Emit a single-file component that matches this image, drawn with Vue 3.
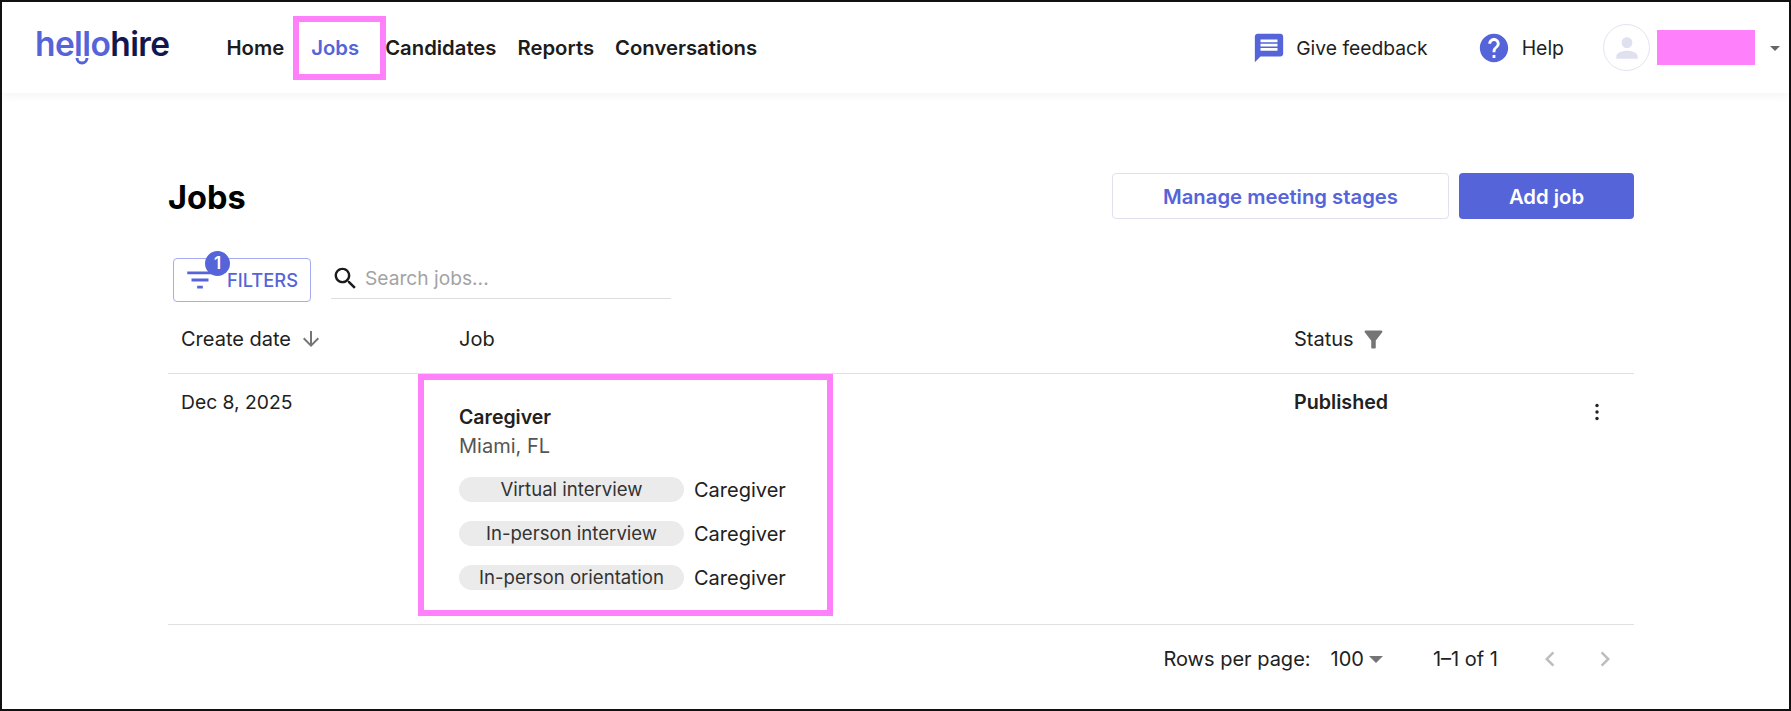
<template>
  <div class="frame">
    <header class="topbar">
      <div class="logo">
        <span class="logo-hello">hello</span><span class="logo-hire">hire</span>
        <svg class="logo-smile" viewBox="0 0 14 9" width="14" height="9">
          <path d="M2 1a5 5 0 0 0 10 0" fill="none" stroke="#5664d9" stroke-width="3" />
        </svg>
      </div>

      <nav class="nav">
        <a v-for="link in links" :key="link" class="nav-link" :class="{ active: link === 'Jobs' }">
          {{ link }}
          <span v-if="link === 'Jobs'" class="mark mark-nav"></span>
        </a>
      </nav>

      <div class="actions">
        <a class="action feedback">
          <svg viewBox="0 0 24 24" width="34" height="34"><path fill="#5664d9" d="M20 2H4c-1.1 0-1.99.9-1.99 2L2 22l4-4h14c1.1 0 2-.9 2-2V4c0-1.1-.9-2-2-2zm-2 12H6v-2h12v2zm0-3H6V9h12v2zm0-3H6V6h12v2z" /></svg>
          Give feedback
        </a>
        <a class="action help">
          <svg viewBox="0 0 24 24" width="34" height="34"><path fill="#5664d9" d="M12 2C6.48 2 2 6.48 2 12s4.48 10 10 10 10-4.48 10-10S17.52 2 12 2zm1 17h-2v-2h2v2zm2.07-7.75l-.9.92C13.45 12.9 13 13.5 13 15h-2v-.5c0-1.1.45-2.1 1.17-2.83l1.24-1.26c.37-.36.59-.86.59-1.41 0-1.1-.9-2-2-2s-2 .9-2 2H8c0-2.21 1.79-4 4-4s4 1.79 4 4c0 .88-.36 1.68-.93 2.25z" /></svg>
          Help
        </a>
        <div class="avatar">
          <svg viewBox="0 0 24 24" width="32" height="32"><path fill="#dfe1ee" d="M12 12c2.21 0 4-1.79 4-4s-1.79-4-4-4-4 1.79-4 4 1.79 4 4 4zm0 2c-2.67 0-8 1.34-8 4v2h16v-2c0-2.66-5.33-4-8-4z" /></svg>
        </div>
        <div class="user-name"></div>
        <svg class="user-caret" viewBox="0 0 24 24" width="24" height="24"><path fill="#666" d="M7 10l5 5 5-5z" /></svg>
      </div>
    </header>

    <main class="page">
      <div class="title-row">
        <h1>Jobs</h1>
        <div class="title-buttons">
          <button class="btn btn-outline">Manage meeting stages</button>
          <button class="btn btn-primary">Add job</button>
        </div>
      </div>

      <div class="toolbar">
        <button class="filters">
          <svg viewBox="0 0 24 24" width="34" height="34"><path fill="#5664d9" d="M10 18h4v-2h-4v2zM3 6v2h18V6H3zm3 7h12v-2H6v2z" /></svg>
          <span class="badge">1</span>
          FILTERS
        </button>
        <div class="search">
          <svg viewBox="0 0 24 24" width="29" height="29"><path fill="#1a1a1a" d="M15.5 14h-.79l-.28-.27C15.41 12.59 16 11.11 16 9.5 16 5.91 13.09 3 9.5 3S3 5.91 3 9.5 5.91 16 9.5 16c1.61 0 3.09-.59 4.23-1.57l.27.28v.79l5 4.99L20.49 19l-4.99-5zm-6 0C7.01 14 5 11.99 5 9.5S7.01 5 9.5 5 14 7.01 14 9.5 11.99 14 9.5 14z" /></svg>
          <span class="placeholder">Search jobs...</span>
        </div>
      </div>

      <div class="table">
        <div class="table-head">
          <div class="th">
            Create date
            <svg class="sort-arrow" viewBox="0 0 24 24" width="24" height="24"><path fill="#757575" d="M20 12l-1.41-1.41L13 16.17V4h-2v12.17l-5.58-5.59L4 12l8 8 8-8z" /></svg>
          </div>
          <div class="th">Job</div>
          <div class="th">
            Status
            <svg class="funnel" viewBox="0 0 24 24" width="27" height="27"><path fill="#757575" d="M4.25 5.61C6.27 8.2 10 13 10 13v6c0 .55.45 1 1 1h2c.55 0 1-.45 1-1v-6s3.72-4.8 5.74-7.39c.51-.66.04-1.61-.79-1.61H5.04c-.83 0-1.3.95-.79 1.61z" /></svg>
          </div>
        </div>

        <div class="table-row">
          <div class="td td-date">Dec 8, 2025</div>
          <div class="td td-job">
            <span class="mark mark-job"></span>
            <div class="job-title">Caregiver</div>
            <div class="job-location">Miami, FL</div>
            <div class="stages">
              <div v-for="stage in stages" :key="stage" class="stage">
                <span class="chip">{{ stage }}</span>
                <span>Caregiver</span>
              </div>
            </div>
          </div>
          <div class="td td-status">
            <span>Published</span>
            <svg class="more" viewBox="0 0 24 24" width="24" height="24">
              <circle cx="12" cy="5.5" r="1.7" fill="#222" />
              <circle cx="12" cy="12" r="1.7" fill="#222" />
              <circle cx="12" cy="18.5" r="1.7" fill="#222" />
            </svg>
          </div>
        </div>

        <div class="pagination">
          <span class="rows-label">Rows per page:</span>
          <span class="rows-value">100</span>
          <svg class="rows-caret" viewBox="7 10 10 5" width="14" height="7"><path fill="#757575" d="M7 10l5 5 5-5z" /></svg>
          <span class="range">1–1 of 1</span>
          <svg class="chev" viewBox="0 0 24 24" width="30" height="30"><path fill="#bdbdbd" d="M15.41 7.41L14 6l-6 6 6 6 1.41-1.41L10.83 12z" /></svg>
          <svg class="chev" viewBox="0 0 24 24" width="30" height="30"><path fill="#bdbdbd" d="M10 6L8.59 7.41 13.17 12l-4.58 4.59L10 18l6-6z" /></svg>
        </div>
      </div>
    </main>
  </div>
</template>

<script setup>
const links = ['Home', 'Jobs', 'Candidates', 'Reports', 'Conversations']
const stages = ['Virtual interview', 'In-person interview', 'In-person orientation']
</script>

<style>
html,
body {
  margin: 0;
  background: #fff;
}
</style>

<style scoped>
.frame {
  box-sizing: border-box;
  width: 1791px;
  height: 711px;
  border: 2px solid #111;
  overflow: hidden;
  font-family: Inter, "Noto Sans", sans-serif;
  font-size: 20px;
  color: #212121;
  background: #fff;
}

/* top bar */
.topbar {
  display: flex;
  align-items: center;
  height: 91px;
  padding: 0 2px 0 33px;
  box-shadow: 0 2px 10px rgba(0, 0, 0, 0.05);
}

.logo {
  position: relative;
  width: 135px;
  margin-top: -7px;
  font-size: 33.5px;
  font-weight: 600;
  letter-spacing: -0.6px;
  line-height: 40px;
}

.logo-hello {
  color: #5664d9;
}

.logo-hire {
  color: #14174d;
}

.logo-smile {
  position: absolute;
  left: 40px;
  top: 33px;
}

.nav {
  display: flex;
  margin-left: 46px;
}

.nav-link {
  position: relative;
  padding: 0 10.5px;
  font-size: 20.3px;
  font-weight: 600;
  line-height: 64px;
  color: #1c1c1c;
}

.nav-link.active {
  padding: 0 15.5px 0 16.5px;
  color: #5664d9;
}

.mark {
  position: absolute;
  box-sizing: border-box;
  border: 6px solid #ff80fb;
  pointer-events: none;
}

.mark-nav {
  left: -2px;
  right: -11px;
  top: 0;
  bottom: 0;
}

.actions {
  display: flex;
  align-items: center;
  margin-left: auto;
}

.action {
  display: flex;
  align-items: center;
  gap: 11px;
  font-size: 19.4px;
}

.feedback {
  gap: 10px;
  margin-right: 49px;
  font-size: 19.3px;
}

.help {
  margin-right: 39px;
}

.avatar {
  display: flex;
  align-items: center;
  justify-content: center;
  box-sizing: border-box;
  width: 47px;
  height: 47px;
  border: 1px solid #e3e3f0;
  border-radius: 50%;
}

.user-name {
  width: 98px;
  height: 35px;
  margin-left: 7px;
  background: #ff80fb;
}

.user-caret {
  margin-left: 8px;
}

/* page */
.page {
  width: 1466px;
  margin-left: 166px;
  padding-top: 80px;
}

.title-row {
  display: flex;
  align-items: center;
  justify-content: space-between;
  height: 46px;
}

h1 {
  margin: 2px 0 0;
  font-size: 32.5px;
  font-weight: 700;
  color: #000;
}

.title-buttons {
  display: flex;
  gap: 10px;
}

.btn {
  box-sizing: border-box;
  height: 46px;
  border-radius: 4px;
  font-family: inherit;
  font-size: 20.3px;
  font-weight: 600;
}

.btn-outline {
  width: 337px;
  border: 1px solid #e0e0ee;
  background: #fff;
  color: #5664d9;
}

.btn-primary {
  width: 175px;
  border: 0;
  background: #5664d9;
  color: #fff;
}

.toolbar {
  display: flex;
  align-items: flex-start;
  margin-top: 39px;
  margin-left: 5px;
}

.filters {
  position: relative;
  display: flex;
  align-items: center;
  gap: 10px;
  box-sizing: border-box;
  width: 138px;
  height: 44px;
  padding: 0 0 0 9px;
  border: 1px solid #a5acf0;
  border-radius: 4px;
  background: #fff;
  font-family: inherit;
  font-size: 18.3px;
  font-weight: 500;
  color: #5664d9;
}

.badge {
  position: absolute;
  left: 31px;
  top: -8px;
  width: 25px;
  height: 25px;
  border-radius: 50%;
  background: #5664d9;
  color: #fff;
  font-size: 17px;
  font-weight: 600;
  line-height: 25px;
  text-align: center;
}

.search {
  display: flex;
  align-items: center;
  gap: 5px;
  box-sizing: border-box;
  width: 340px;
  height: 41px;
  margin-left: 20px;
  border-bottom: 1px solid #dedede;
  font-size: 19.2px;
}

.placeholder {
  color: #a3a3a3;
}

/* table */
.table-head,
.table-row {
  display: grid;
  grid-template-columns: 278px 835px 353px;
  border-bottom: 1px solid #e0e0e0;
}

.table-head {
  height: 72px;
  box-sizing: border-box;
}

.th {
  display: flex;
  align-items: center;
  gap: 7px;
  padding-left: 13px;
  padding-top: 3px;
}

.sort-arrow {
  margin-left: 1px;
}

.funnel {
  margin-left: -1px;
}

.table-row {
  box-sizing: border-box;
  height: 251px;
}

.td {
  position: relative;
  padding-left: 13px;
}

.td-date,
.td-status {
  padding-top: 17px;
  line-height: 22px;
}

.td-date {
  font-size: 19.3px;
}

.td-status {
  display: flex;
  justify-content: space-between;
  font-size: 19.7px;
  font-weight: 600;
}

.more {
  margin: 9px 25px 0 0;
}

.mark-job {
  left: -28px;
  top: 0;
  width: 415px;
  height: 242px;
}

.td-job {
  padding-top: 32px;
}

.job-title {
  font-size: 19.5px;
  font-weight: 600;
  line-height: 22px;
}

.job-location {
  margin-top: 7px;
  line-height: 22px;
  color: #555;
}

.stages {
  display: flex;
  flex-direction: column;
  gap: 19px;
  margin-top: 20px;
}

.stage {
  display: flex;
  align-items: center;
  gap: 10px;
  height: 25px;
}

.chip {
  width: 225px;
  height: 25px;
  border-radius: 13px;
  background: #ebebeb;
  font-size: 18.6px;
  line-height: 25px;
  text-align: center;
  color: #333;
}

.pagination {
  display: flex;
  align-items: center;
  justify-content: flex-end;
  height: 68px;
  padding-right: 14px;
}

.rows-value {
  margin-left: 20px;
}

.rows-caret {
  margin-left: 5px;
}

.range {
  margin-left: 50px;
}

.chev {
  margin-left: 37px;
}

.chev + .chev {
  margin-left: 25px;
}
</style>
